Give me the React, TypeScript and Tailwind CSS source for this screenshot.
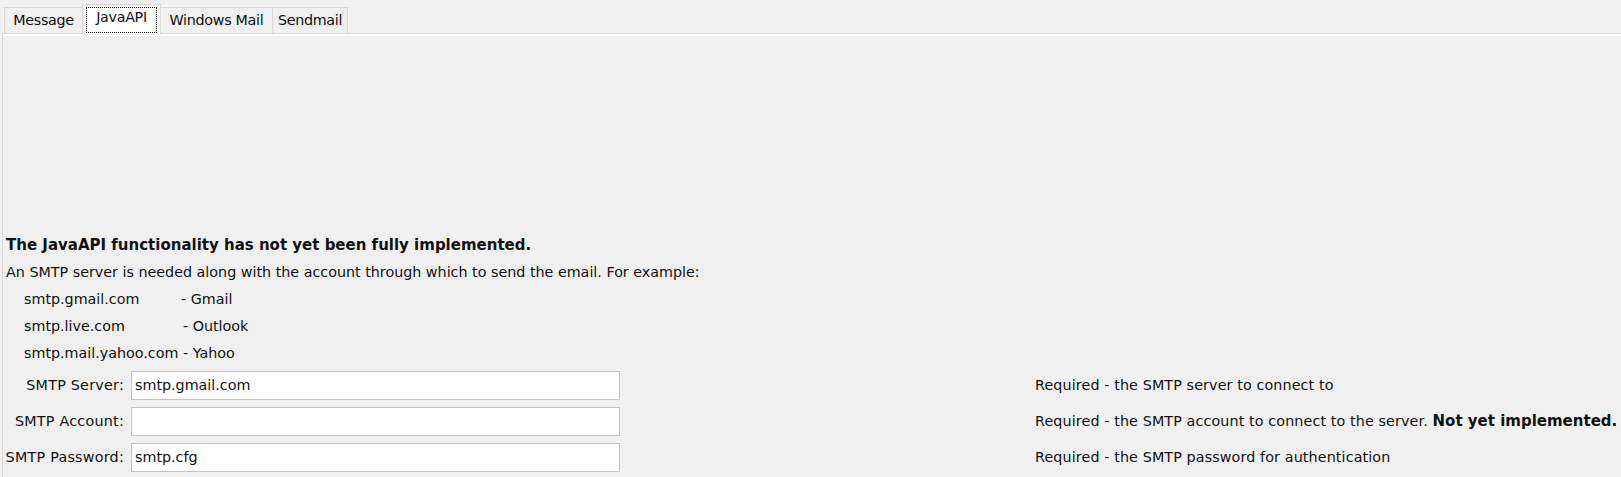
import React from "react";

const tabs = ["Message", "JavaAPI", "Windows Mail", "Sendmail"];
const tabWidths = ["w-[78px]", "w-[79px]", "w-[111px]", "w-[76px]"];

const examples = [
  { host: "smtp.gmail.com", name: "- Gmail", w: "w-[157px]" },
  { host: "smtp.live.com", name: "- Outlook", w: "w-[159px]" },
  { host: "smtp.mail.yahoo.com ", name: "- Yahoo", w: "" },
];

function Field({
  label,
  value,
  children,
}: {
  label: string;
  value: string;
  children: React.ReactNode;
}) {
  return (
    <div className="flex items-center h-[29px]">
      <div className="w-[121px] text-right whitespace-nowrap tracking-[0.25px]">{label}</div>
      <div className="ml-[7px] w-[489px] h-[29px] bg-white border border-[#c4c4c8] flex items-center pl-[3px]">
        {value}
      </div>
      <div className="ml-[415px] whitespace-nowrap tracking-[0.12px]">{children}</div>
    </div>
  );
}

export default function App() {
  return (
    <div className="w-[1621px] h-[477px] bg-[#f0f0f0] overflow-hidden text-[14.3px] text-[#111] font-['DejaVu_Sans',sans-serif]">
      <div className="flex items-end h-[33px] pl-[4px]">
        {tabs.map((t, i) => {
          const selected = t === "JavaAPI";
          return selected ? (
            <div
              key={t}
              className={`${tabWidths[i]} h-[30px] -mb-[1px] relative z-10 bg-white border-l border-t border-r border-[#d9d9d9] px-[3px] pt-[2px] pb-[1px]`}
            >
              <div className="h-full border border-dotted border-black flex items-center justify-center pb-[5px] tracking-[-0.3px]">
                {t}
              </div>
            </div>
          ) : (
            <div
              key={t}
              className={`${tabWidths[i]} h-[26px] bg-[#f0f0f0] border-t border-[#d9d9d9] ${
                i === 0 || i === 3 ? "border-l" : ""
              } ${i === 3 ? "border-r" : ""} flex items-center justify-center tracking-[-0.3px]`}
            >
              {t}
            </div>
          );
        })}
      </div>
      <div className="ml-[2px] w-[1700px] h-[444px] border-l border-t border-[#d9d9d9]">
        <div className="h-full border-t-2 border-white flex flex-col justify-end pb-[5px]">
          <div className="pl-[3px] leading-[27px]">
            <div className="font-bold text-[15px]">
              The JavaAPI functionality has not yet been fully implemented.
            </div>
            <div>
              An SMTP server is needed along with the account through which to
              send the email. For example:
            </div>
            {examples.map((e) => (
              <div key={e.host} className="pl-[18px] whitespace-pre">
                <span className={`inline-block ${e.w}`}>{e.host}</span>
                {e.name}
              </div>
            ))}
          </div>
          <div className="mt-[4px] flex flex-col gap-[7px]">
            <Field label="SMTP Server:" value="smtp.gmail.com">
              Required - the SMTP server to connect to
            </Field>
            <Field label="SMTP Account:" value="">
              Required - the SMTP account to connect to the server.{" "}
              <span className="font-bold text-[15px] tracking-normal">Not yet implemented.</span>
            </Field>
            <Field label="SMTP Password:" value="smtp.cfg">
              Required - the SMTP password for authentication
            </Field>
          </div>
        </div>
      </div>
    </div>
  );
}
